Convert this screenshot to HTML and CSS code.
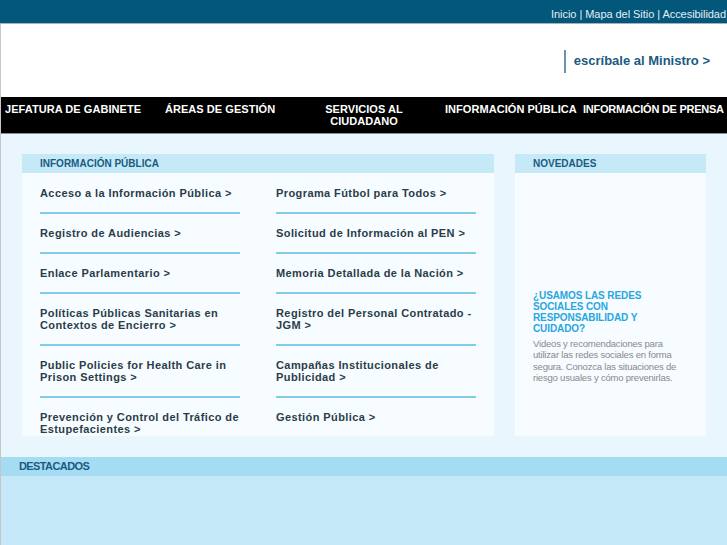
FILE: index.html
```html
<!DOCTYPE html>
<html lang="es">
<head>
<meta charset="utf-8">
<title>Jefatura de Gabinete de Ministros</title>
<link rel="stylesheet" href="styles.css">
</head>
<body>
<div class="topbar">
  <nav class="util"><a>Inicio</a> | <a>Mapa del Sitio</a> | <a>Accesibilidad</a></nav>
</div>
<div class="page">
  <header class="header">
    <a class="minister">escríbale al Ministro &gt;</a>
  </header>
  <nav class="mainnav">
    <a class="nav-item n1">JEFATURA DE GABINETE</a>
    <a class="nav-item n2">ÁREAS DE GESTIÓN</a>
    <a class="nav-item n3">SERVICIOS AL<br>CIUDADANO</a>
    <a class="nav-item n4">INFORMACIÓN PÚBLICA</a>
    <a class="nav-item n5">INFORMACIÓN DE PRENSA</a>
  </nav>
  <main class="content">
    <section class="panel info">
      <h2 class="panel-title">INFORMACIÓN PÚBLICA</h2>
      <ul class="links">
        <li><a>Acceso a la Información Pública &gt;</a></li>
        <li><a>Programa Fútbol para Todos &gt;</a></li>
        <li><a>Registro de Audiencias &gt;</a></li>
        <li><a>Solicitud de Información al PEN &gt;</a></li>
        <li><a>Enlace Parlamentario &gt;</a></li>
        <li><a>Memoria Detallada de la Nación &gt;</a></li>
        <li><a>Políticas Públicas Sanitarias en Contextos de Encierro &gt;</a></li>
        <li><a>Registro del Personal Contratado - JGM &gt;</a></li>
        <li><a>Public Policies for Health Care in Prison Settings &gt;</a></li>
        <li><a>Campañas Institucionales de Publicidad &gt;</a></li>
        <li class="last"><a>Prevención y Control del Tráfico de Estupefacientes &gt;</a></li>
        <li class="last"><a>Gestión Pública &gt;</a></li>
      </ul>
    </section>
    <aside class="panel news">
      <h2 class="panel-title">NOVEDADES</h2>
      <div class="news-body">
        <div class="news-img"></div>
        <h3 class="news-title">¿USAMOS LAS REDES SOCIALES CON RESPONSABILIDAD Y CUIDADO?</h3>
        <p class="news-desc">Videos y recomendaciones para utilizar las redes sociales en forma segura. Conozca las situaciones de riesgo usuales y cómo prevenirlas.</p>
      </div>
    </aside>
  </main>
  <section class="destacados">
    <h2 class="dest-title">DESTACADOS</h2>
    <div class="dest-body"></div>
  </section>
</div>
</body>
</html>
```

FILE: styles.css
```css
* { box-sizing: border-box; }
html, body { margin: 0; padding: 0; }
body {
  font-family: "Liberation Sans", Arial, sans-serif;
  background: #ffffff;
  width: 727px;
  overflow: hidden;
}
a { color: inherit; text-decoration: none; }
h2, h3, p, ul { margin: 0; padding: 0; }

.topbar {
  height: 24px;
  background: #02577a;
  border-bottom: 1px solid #a2b3bf;
  display: flex;
  justify-content: flex-end;
  align-items: center;
  padding-top: 4px;
  padding-right: 1px;
}
.util {
  color: #e4eef4;
  font-size: 11px;
  letter-spacing: -0.05px;
  white-space: nowrap;
}

.page {
  border-left: 1px solid #c6c6c6;
}

.header {
  height: 73px;
  display: flex;
  justify-content: flex-end;
  align-items: flex-start;
  padding-top: 26px;
  padding-right: 17px;
}
.minister {
  border-left: 2px solid #6a93ae;
  padding-left: 8px;
  height: 23px;
  line-height: 22px;
  font-size: 13px;
  font-weight: bold;
  letter-spacing: 0;
  color: #1a5b80;
  white-space: nowrap;
}

.mainnav {
  height: 37px;
  background: #000;
  border-bottom: 1px solid #8d8d8d;
  display: flex;
  padding: 7px 0 0 4px;
  color: #fff;
  font-size: 11px;
  font-weight: bold;
  line-height: 11.5px;
  letter-spacing: 0.05px;
  white-space: nowrap;
  overflow: hidden;
}
.nav-item { flex: none; }
.n1 { width: 160px; }
.n2 { width: 140px; }
.n3 { width: 118px; text-align: center; }
.n4 { width: 138px; margin-left: 22px; }
.n5 { letter-spacing: -0.25px; }

.content {
  background: #eaf6fd;
  display: flex;
  gap: 21px;
  padding: 20px 21px 21px 21px;
}
.panel {
  height: 282px;
  overflow: hidden;
  background: #f6fcff;
}
.info { width: 472px; }
.news { width: 191px; }
.panel-title {
  height: 19px;
  background: #c6e9f8;
  color: #1a5b80;
  font-size: 10px;
  font-weight: bold;
  line-height: 19px;
  padding-left: 18px;
  letter-spacing: 0;
}

.links {
  list-style: none;
  display: grid;
  grid-template-columns: 200px 200px;
  column-gap: 36px;
  padding: 1px 18px 0 18px;
}
.links li {
  padding: 13px 0 13px;
  border-bottom: 2px solid #80cdeb;
  font-size: 11px;
  line-height: 12px;
  font-weight: bold;
  color: #2b3c49;
  letter-spacing: 0.41px;
}
.links li.last { border-bottom: none; }

.news-body { padding: 0 18px; }
.news-img { height: 117px; }
.news-title {
  color: #2aa6de;
  font-size: 10px;
  line-height: 11px;
  font-weight: bold;
  letter-spacing: -0.1px;
}
.news-desc {
  margin-top: 4px;
  color: #8a8a8a;
  font-size: 9.5px;
  line-height: 11.3px;
  letter-spacing: -0.2px;
}

.destacados { background: #c5e9f8; }
.dest-title {
  height: 19px;
  background: #a4dcf3;
  color: #1a5b80;
  font-size: 11px;
  font-weight: bold;
  line-height: 19px;
  padding-left: 18px;
  letter-spacing: -0.6px;
}
.dest-body { height: 80px; }
```
